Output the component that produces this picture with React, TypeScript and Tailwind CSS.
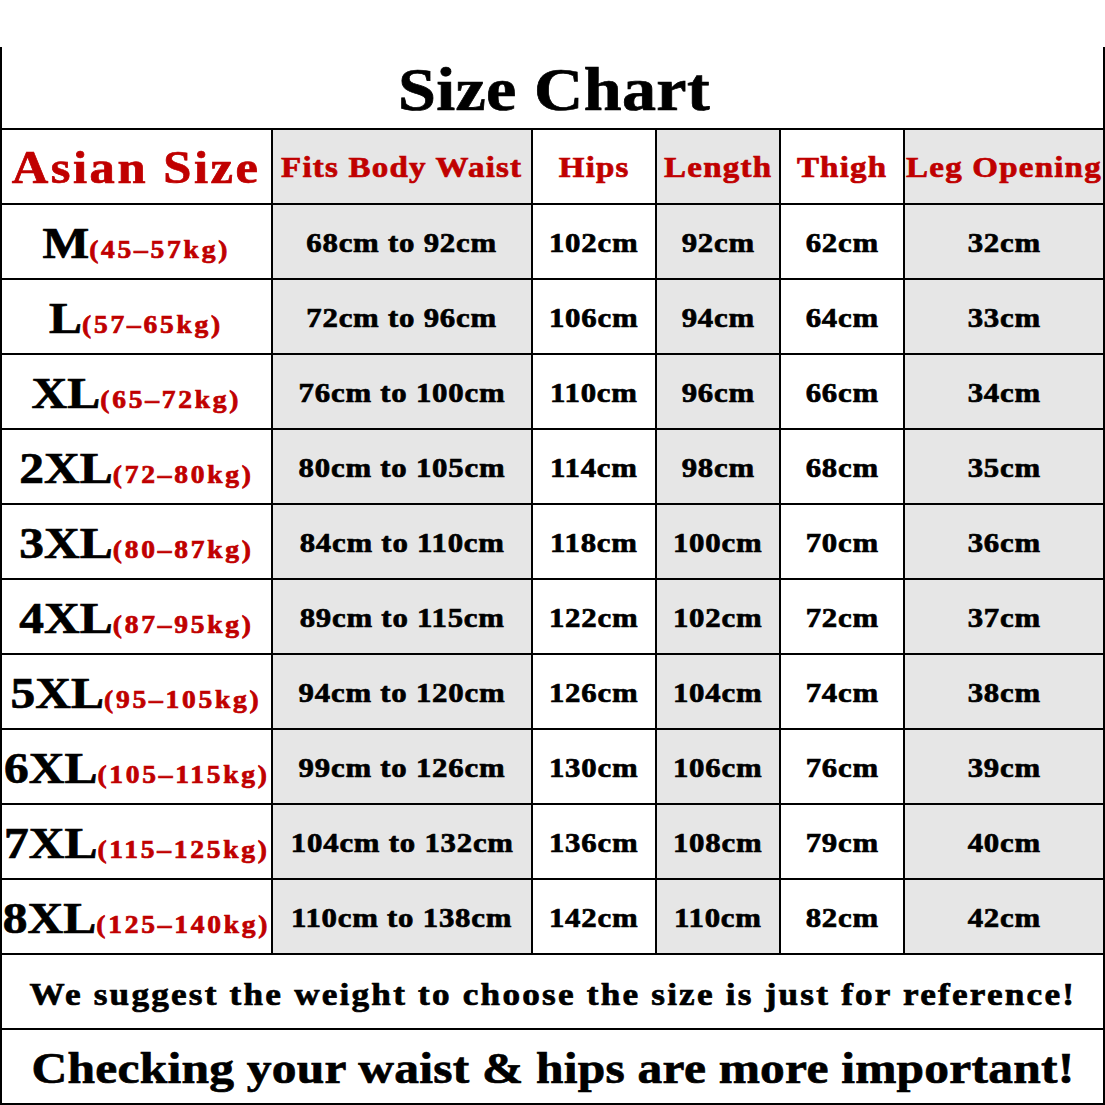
const rows = [
  { size: "M", kg: "(45–57kg)", waist: "68cm to 92cm", hips: "102cm", length: "92cm", thigh: "62cm", leg: "32cm" },
  { size: "L", kg: "(57–65kg)", waist: "72cm to 96cm", hips: "106cm", length: "94cm", thigh: "64cm", leg: "33cm" },
  { size: "XL", kg: "(65–72kg)", waist: "76cm to 100cm", hips: "110cm", length: "96cm", thigh: "66cm", leg: "34cm" },
  { size: "2XL", kg: "(72–80kg)", waist: "80cm to 105cm", hips: "114cm", length: "98cm", thigh: "68cm", leg: "35cm" },
  { size: "3XL", kg: "(80–87kg)", waist: "84cm to 110cm", hips: "118cm", length: "100cm", thigh: "70cm", leg: "36cm" },
  { size: "4XL", kg: "(87–95kg)", waist: "89cm to 115cm", hips: "122cm", length: "102cm", thigh: "72cm", leg: "37cm" },
  { size: "5XL", kg: "(95–105kg)", waist: "94cm to 120cm", hips: "126cm", length: "104cm", thigh: "74cm", leg: "38cm" },
  { size: "6XL", kg: "(105–115kg)", waist: "99cm to 126cm", hips: "130cm", length: "106cm", thigh: "76cm", leg: "39cm" },
  { size: "7XL", kg: "(115–125kg)", waist: "104cm to 132cm", hips: "136cm", length: "108cm", thigh: "79cm", leg: "40cm" },
  { size: "8XL", kg: "(125–140kg)", waist: "110cm to 138cm", hips: "142cm", length: "110cm", thigh: "82cm", leg: "42cm" },
]

const gridCols = "grid grid-cols-[269px_258px_122px_122px_122px_198px] gap-[2px] h-[73px]"

function Cell({ gray, children }: { gray?: boolean; children: React.ReactNode }) {
  return (
    <div className={`flex items-center justify-center whitespace-nowrap ${gray ? "bg-[#e6e6e6]" : "bg-white"}`}>
      {children}
    </div>
  )
}

function Head({ children }: { children: React.ReactNode }) {
  return (
    <span className="inline-block scale-x-[1.1] text-[30px] tracking-[1.1px] text-[#c00000] leading-none pt-[1px]">
      {children}
    </span>
  )
}

function Val({ children }: { children: React.ReactNode }) {
  return (
    <span className="inline-block scale-x-[1.1] text-[28px] tracking-[0.7px] text-black leading-none pt-[3px]">
      {children}
    </span>
  )
}

export default function App() {
  return (
    <div className="w-[1105px] h-[1105px] bg-white pt-[47px] font-['Liberation_Serif',serif] font-bold [-webkit-text-stroke:0.7px]">
      <div className="w-[1105px] bg-black px-[2px] pb-[2px] flex flex-col gap-[2px]">
        <div className="h-[81px] bg-white flex items-center justify-center">
          <span className="inline-block scale-x-[1.1] text-[62px] tracking-[0.3px] leading-none text-black pt-[2px] pl-[3px]">
            Size Chart
          </span>
        </div>

        <div className={gridCols}>
          <Cell>
            <span className="inline-block scale-x-[1.1] text-[46px] tracking-[2.3px] text-[#c00000] leading-none pt-[2px]">
              Asian Size
            </span>
          </Cell>
          <Cell gray>
            <Head>Fits Body Waist</Head>
          </Cell>
          <Cell>
            <Head>Hips</Head>
          </Cell>
          <Cell gray>
            <Head>Length</Head>
          </Cell>
          <Cell>
            <Head>Thigh</Head>
          </Cell>
          <Cell gray>
            <Head>Leg Opening</Head>
          </Cell>
        </div>

        {rows.map((r) => (
          <div key={r.size} className={gridCols}>
            <Cell>
              <span className="inline-block scale-x-[1.1] leading-none pt-[4px]">
                <span className="text-[45px] text-black">{r.size}</span>
                <span className="text-[25px] tracking-[2.5px] text-[#c00000]">{r.kg}</span>
              </span>
            </Cell>
            <Cell gray>
              <Val>{r.waist}</Val>
            </Cell>
            <Cell>
              <Val>{r.hips}</Val>
            </Cell>
            <Cell gray>
              <Val>{r.length}</Val>
            </Cell>
            <Cell>
              <Val>{r.thigh}</Val>
            </Cell>
            <Cell gray>
              <Val>{r.leg}</Val>
            </Cell>
          </div>
        ))}

        <div className="h-[73px] bg-white flex items-center justify-center">
          <span className="inline-block scale-x-[1.1] text-[32px] tracking-[2px] leading-none text-black whitespace-nowrap pt-[4px]">
            We suggest the weight to choose the size is just for reference!
          </span>
        </div>
        <div className="h-[73px] bg-white flex items-center justify-center">
          <span className="inline-block scale-x-[1.1] text-[45px] tracking-[0.2px] leading-none text-black whitespace-nowrap pt-[4px]">
            Checking your waist &amp; hips are more important!
          </span>
        </div>
      </div>
    </div>
  )
}
